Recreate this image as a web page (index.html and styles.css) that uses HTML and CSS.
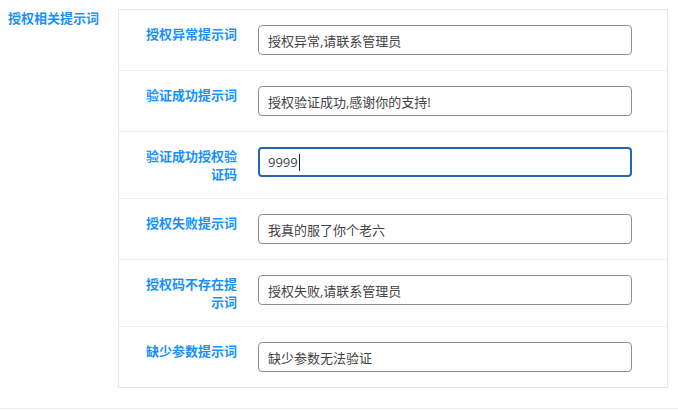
FILE: index.html
```html
<!DOCTYPE html>
<html lang="zh-CN">
<head>
<meta charset="utf-8">
<title>授权相关提示词</title>
<link rel="stylesheet" href="styles.css">
</head>
<body>
<div class="page">
  <div class="section">
    <div class="section-title">授权相关提示词</div>
    <div class="box">
      <div class="row">
        <label class="label">授权异常提示词</label>
        <input class="field" type="text" value="授权异常,请联系管理员">
      </div>
      <div class="row">
        <label class="label">验证成功提示词</label>
        <input class="field" type="text" value="授权验证成功,感谢你的支持!">
      </div>
      <div class="row">
        <label class="label">验证成功授权验证码</label>
        <div class="field is-focused"><span>9999</span><span class="caret"></span></div>
      </div>
      <div class="row">
        <label class="label">授权失败提示词</label>
        <input class="field" type="text" value="我真的服了你个老六">
      </div>
      <div class="row">
        <label class="label">授权码不存在提示词</label>
        <input class="field" type="text" value="授权失败,请联系管理员">
      </div>
      <div class="row">
        <label class="label">缺少参数提示词</label>
        <input class="field" type="text" value="缺少参数无法验证">
      </div>
    </div>
  </div>
  <div class="divider"></div>
</div>
</body>
</html>
```

FILE: styles.css
```css
* { box-sizing: border-box; }
html, body { margin: 0; padding: 0; background: #fff; }
body {
  font-family: "Open Sans", "Noto Sans CJK SC", sans-serif;
  font-size: 13px;
  color: #333;
}
.page { padding-top: 9px; }
.section {
  display: flex;
  align-items: flex-start;
  padding: 0 10px 0 8px;
}
.section-title {
  width: 110px;
  flex: none;
  font-family: "Noto Sans CJK SC", sans-serif;
  font-weight: bold;
  font-size: 13px;
  line-height: 18px;
  color: #1890ff;
}
.box {
  flex: 1;
  border: 1px solid #e6e6e6;
}
.row {
  display: flex;
  align-items: flex-start;
  padding: 15px 0;
  border-bottom: 1px solid #eeeeee;
}
.row:last-child { border-bottom: none; }
.label {
  width: 100px;
  flex: none;
  margin-left: 18px;
  text-align: right;
  font-family: "Noto Sans CJK SC", sans-serif;
  font-weight: bold;
  font-size: 13px;
  line-height: 18px;
  color: #1890ff;
}
.field {
  margin-left: 21px;
  width: 374px;
  height: 30px;
  padding: 0 9px;
  border: 1px solid #8f8f8f;
  border-radius: 4px;
  font-family: "Open Sans", "Noto Sans CJK SC", sans-serif;
  font-size: 13px;
  color: #444;
  background: #fff;
  outline: none;
}
.field.is-focused {
  display: flex;
  align-items: center;
  border: 2px solid #2468ae;
  padding: 0 8px;
}
.caret {
  display: inline-block;
  width: 1px;
  height: 17px;
  background: #222;
  margin-left: 1px;
}
.divider {
  margin-top: 20px;
  border-top: 1px solid #eeeeee;
}
```
